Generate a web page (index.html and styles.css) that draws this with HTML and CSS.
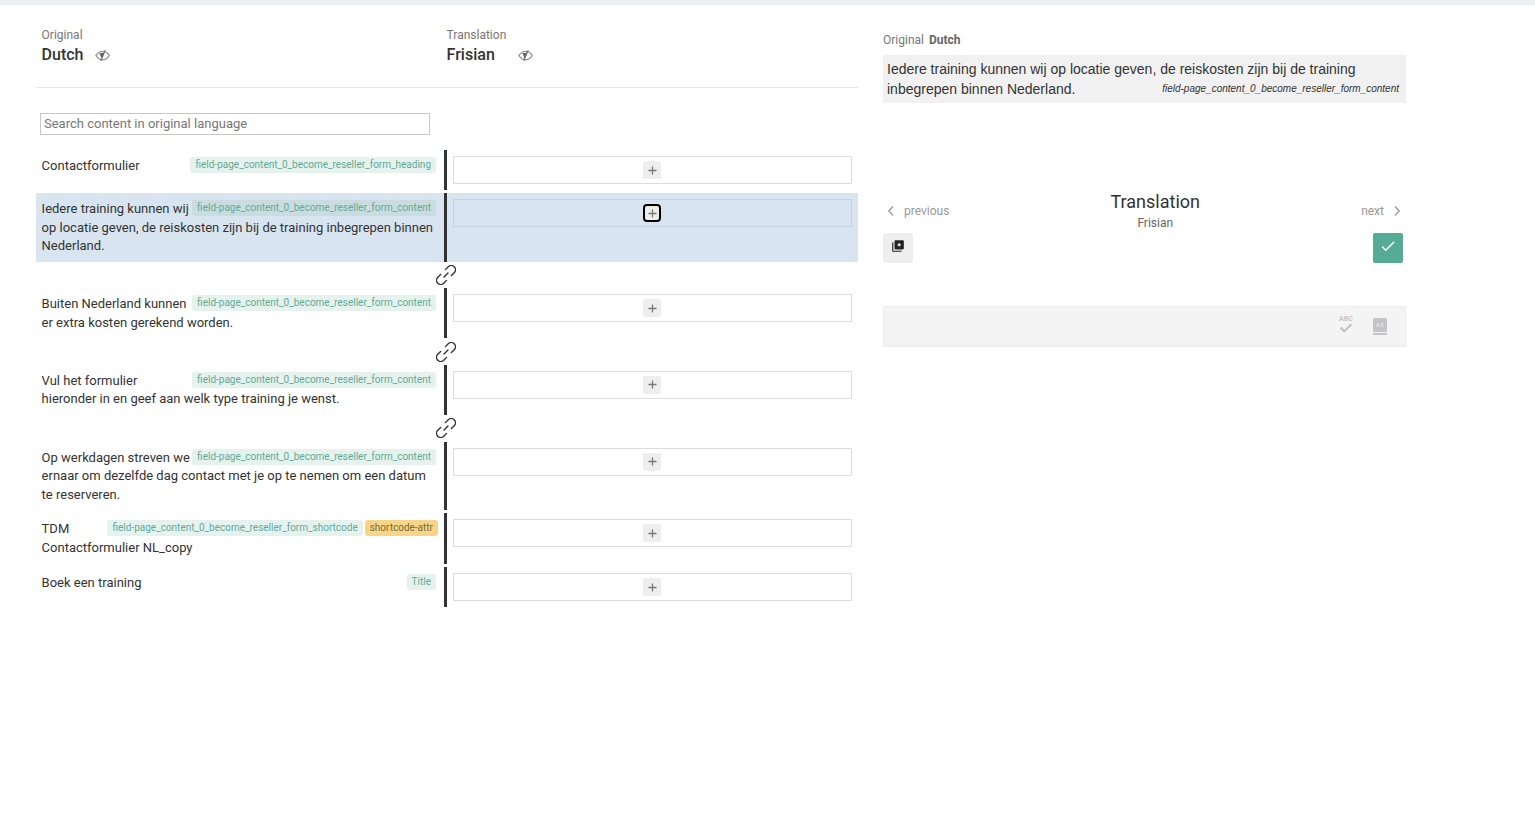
FILE: index.html
```html
<!DOCTYPE html>
<html lang="en">
<head>
<meta charset="utf-8">
<title>Translation editor</title>
<link rel="stylesheet" href="styles.css">
</head>
<body>
<svg class="defs" width="0" height="0" aria-hidden="true">
  <symbol id="eye" viewBox="0 0 14 12">
    <path d="M.8 6 C3 3 5 2 7 2 C9 2 11.5 3 13.4 6 C11.5 9 9 10 7 10 C5 10 3 9 .8 6Z" fill="none" stroke="currentColor" stroke-width="1.1" opacity=".8"/>
    <path d="M4 4 L8.6 3.2 L6.2 8.8 Z" fill="currentColor"/>
    <path d="M9.6 1 L5.4 11" fill="none" stroke="currentColor" stroke-width="1"/>
  </symbol>
  <symbol id="link" viewBox="0 0 20 20">
    <g transform="rotate(-45 10 10)" fill="none" stroke="currentColor" stroke-width="1.4" stroke-linecap="round">
      <path d="M6.6 5.8 H2.6 a4.2 4.2 0 0 0 0 8.4 H6.6"/>
      <path d="M13.4 5.8 H17.4 a4.2 4.2 0 0 1 0 8.4 H13.4"/>
      <path d="M7.2 10 H12.8"/>
    </g>
  </symbol>
  <symbol id="plus" viewBox="0 0 10 10">
    <path d="M5 .5 V9.5 M.5 5 H9.5" fill="none" stroke="currentColor" stroke-width="1.4"/>
  </symbol>
</svg>
<div class="topbar"></div>
<main class="page">
  <section class="left">
    <header class="lang-head">
      <div class="lang lang-orig">
        <div class="lang-label">Original</div>
        <div class="lang-name">Dutch <svg class="eye eye-orig"><use href="#eye"/></svg></div>
      </div>
      <div class="lang">
        <div class="lang-label">Translation</div>
        <div class="lang-name">Frisian <svg class="eye eye-trans"><use href="#eye"/></svg></div>
      </div>
    </header>
    <div class="search-wrap"><input class="search" type="text" placeholder="Search content in original language"></div>
    <div class="rows">
      <div class="row">
        <div class="src"><span class="tags"><span class="tag">field-page_content_0_become_reseller_form_heading</span></span>Contactformulier</div>
        <div class="cell"><div class="box"><button class="add"><svg><use href="#plus"/></svg></button></div></div>
      </div>
      <div class="row active">
        <div class="src"><span class="tags"><span class="tag">field-page_content_0_become_reseller_form_content</span></span>Iedere training kunnen wij op locatie geven, de reiskosten zijn bij de training inbegrepen binnen Nederland.</div>
        <div class="cell"><div class="box"><button class="add focus"><svg><use href="#plus"/></svg></button></div></div>
      </div>
      <div class="link-row"><svg class="link"><use href="#link"/></svg></div>
      <div class="row">
        <div class="src"><span class="tags"><span class="tag">field-page_content_0_become_reseller_form_content</span></span>Buiten Nederland kunnen er extra kosten gerekend worden.</div>
        <div class="cell"><div class="box"><button class="add"><svg><use href="#plus"/></svg></button></div></div>
      </div>
      <div class="link-row"><svg class="link"><use href="#link"/></svg></div>
      <div class="row">
        <div class="src"><span class="tags"><span class="tag">field-page_content_0_become_reseller_form_content</span></span>Vul het formulier hieronder in en geef aan welk type training je wenst.</div>
        <div class="cell"><div class="box"><button class="add"><svg><use href="#plus"/></svg></button></div></div>
      </div>
      <div class="link-row"><svg class="link"><use href="#link"/></svg></div>
      <div class="row">
        <div class="src"><span class="tags"><span class="tag">field-page_content_0_become_reseller_form_content</span></span>Op werkdagen streven we ernaar om dezelfde dag contact met je op te nemen om een datum te reserveren.</div>
        <div class="cell"><div class="box"><button class="add"><svg><use href="#plus"/></svg></button></div></div>
      </div>
      <div class="row row-tall">
        <div class="src"><span class="tags tags-wide"><span class="tag">field-page_content_0_become_reseller_form_shortcode</span><span class="tag tag-attr">shortcode-attr</span></span>TDM Contactformulier NL_copy</div>
        <div class="cell"><div class="box"><button class="add"><svg><use href="#plus"/></svg></button></div></div>
      </div>
      <div class="row">
        <div class="src"><span class="tags"><span class="tag">Title</span></span>Boek een training</div>
        <div class="cell"><div class="box"><button class="add"><svg><use href="#plus"/></svg></button></div></div>
      </div>
    </div>
  </section>
  <aside class="right">
    <div class="orig-label">Original <b>Dutch</b></div>
    <div class="orig-box">Iedere training kunnen wij op locatie geven, de reiskosten zijn bij de training inbegrepen <span class="orig-field">field-page_content_0_become_reseller_form_content</span>binnen Nederland.</div>
    <div class="nav">
      <span class="nav-link"><svg class="chev" viewBox="0 0 8 12"><path d="M6 1.5 L1.8 6 L6 10.5"/></svg>previous</span>
      <div class="nav-title">
        <div class="nav-h">Translation</div>
        <div class="nav-sub">Frisian</div>
      </div>
      <span class="nav-link">next<svg class="chev" viewBox="0 0 8 12"><path d="M2 1.5 L6.2 6 L2 10.5"/></svg></span>
    </div>
    <div class="actions">
      <button class="act act-copy"><svg viewBox="0 0 24 24"><path d="M4 6H2v14c0 1.1.9 2 2 2h14v-2H4V6zm16-4H8c-1.1 0-2 .9-2 2v12c0 1.1.9 2 2 2h12c1.1 0 2-.9 2-2V4c0-1.1-.9-2-2-2zm-3 9h-2v2h-2v-2h-2V9h2V7h2v2h2v2z"/></svg></button>
      <button class="act act-ok"><svg viewBox="0 0 24 24"><path d="M9 16.17L4.83 12l-1.41 1.41L9 19 21 7l-1.41-1.41z"/></svg></button>
    </div>
    <div class="tools">
      <span class="spell"><span class="spell-t">ABC</span><svg viewBox="0 0 14 10"><path d="M1.5 4.5 L5.2 8.2 L12.5 1.2"/></svg></span>
      <span class="book"><span class="book-t">A-Z</span></span>
    </div>
  </aside>
</main>
</body>
</html>
```

FILE: styles.css
```css
* { box-sizing: border-box; }
html, body { margin: 0; padding: 0; }
body { background: #fff; color: #333; font-family: Roboto, "Liberation Sans", sans-serif; font-size: 13px; line-height: 18.57px; }
.defs { position: absolute; }
.topbar { height: 5px; background: #ecf0f3; }
.page { display: flex; align-items: flex-start; padding-left: 36px; }
.left { width: 822px; flex: none; }
.right { width: 523px; flex: none; margin-left: 25px; padding-top: 27px; }

.lang-head { display: flex; height: 83px; padding: 22px 0 0 5.6px; border-bottom: 1px solid #e3e8e8; }
.lang { width: 405px; }
.lang-label { font-size: 12px; line-height: 17px; color: #777; }
.lang-name { display: flex; align-items: center; font-size: 16px; font-weight: 500; line-height: 22px; color: #333; }
.eye { width: 15px; height: 13px; color: #666; margin-top: 1px; }
.eye-orig { margin-left: 11px; }
.eye-trans { margin-left: 23px; }

.search-wrap { padding: 25px 0 15px 4px; }
.search { display: block; width: 390px; height: 22px; padding: 0 3px 2px; border: 1px solid #c8c8c8; border-radius: 0; font: 13px Roboto, sans-serif; color: #333; outline: none; }
.search::placeholder { color: #777; opacity: 1; }

.rows { display: flex; flex-direction: column; gap: 3px; }
.row { display: flex; }
.row.active { background: #d8e4f0; }
.row-tall { min-height: 51px; }
.src { width: 408px; flex: none; padding: 7px 8px 6px 5.6px; }
.tags { float: right; display: flex; margin-left: 2px; }
.tags-wide { margin-right: -2px; }
.tag { display: block; height: 16px; padding: 0 5px; border-radius: 3px; background: #e6f2ee; color: #62ab96; font-size: 10px; line-height: 15px; white-space: nowrap; }
.active .tag { background: #c9dde0; }
.tag-attr { margin-left: 2px; background: #f6d588; color: #7a6a3a; }
.cell { flex: 1; border-left: 3px solid #333; padding: 6px; }
.box { display: flex; justify-content: center; align-items: center; height: 28px; border: 1px solid #ddd; background: #fff; }
.active .box { background: #d8e4f0; border-color: #c8d2dc; }
.add { display: flex; align-items: center; justify-content: center; width: 18px; height: 18px; margin-right: 1px; padding: 0; border: 0; border-radius: 2px; background: #eee; color: #777; }
.add svg { width: 9px; height: 9px; }
.add.focus { outline: 2px solid #000; outline-offset: -2px; border-radius: 4px; }
.link-row { display: flex; height: 20.55px; padding-left: 400px; align-items: center; }
.link { width: 20px; height: 20px; color: #333; flex: none; }

.orig-label { font-size: 12px; line-height: 17px; color: #777; height: 23px; }
.orig-label b { margin-left: 2px; color: #666; font-weight: 700; }
.orig-box { height: 48px; padding: 4px 7px 0 4px; background: #f1f1f1; font-family: "Liberation Sans", sans-serif; font-size: 14px; line-height: 20px; color: #333; }
.orig-field { float: right; font-family: "Liberation Sans", sans-serif; font-size: 10px; font-style: italic; line-height: 20px; color: #333; }

.nav { display: flex; justify-content: space-between; align-items: flex-end; margin-top: 87px; padding: 0 5px 0 4px; }
.nav-link { display: flex; align-items: center; gap: 9px; margin-bottom: 11px; font-size: 12px; color: #999; }
.chev { width: 8px; height: 12px; margin-top: -2px; fill: none; stroke: #999; stroke-width: 1.3; }
.nav-title { text-align: center; }
.nav-h { font-size: 18px; line-height: 24px; color: #333; }
.nav-sub { font-size: 12px; line-height: 18px; color: #666; }

.actions { display: flex; justify-content: space-between; margin-top: 1px; padding-right: 3px; }
.act { display: flex; align-items: center; justify-content: center; width: 30px; height: 30px; padding: 0 0 4px; border: 0; border-radius: 2px; }
.act svg { width: 14px; height: 14px; }
.act-copy { background: #eee; fill: #222; padding-right: 1px; }
.act-ok { background: #55ab93; fill: #fff; }
.act-ok svg { width: 18px; height: 18px; }

.tools { display: flex; justify-content: flex-end; align-items: center; gap: 20px; height: 41px; margin-top: 43px; padding-right: 18px; background: #f4f4f4; border: 1px solid #eee; border-bottom-width: 2px; }
.spell { display: flex; flex-direction: column; align-items: center; width: 14px; margin-top: -4px; }
.spell-t { font-size: 7px; font-weight: 700; line-height: 8px; color: #c4c4c4; }
.spell svg { width: 14px; height: 10px; fill: none; stroke: #c4c4c4; stroke-width: 2.2; }
.book { display: flex; align-items: center; justify-content: center; width: 14px; height: 14px; margin-top: -2px; background: #c4c4c4; border-radius: 1px; box-shadow: 0 1px 0 #f4f4f4, 0 3px 0 #c4c4c4; }
.book-t { font-size: 5px; line-height: 8px; color: #eee; }
```
